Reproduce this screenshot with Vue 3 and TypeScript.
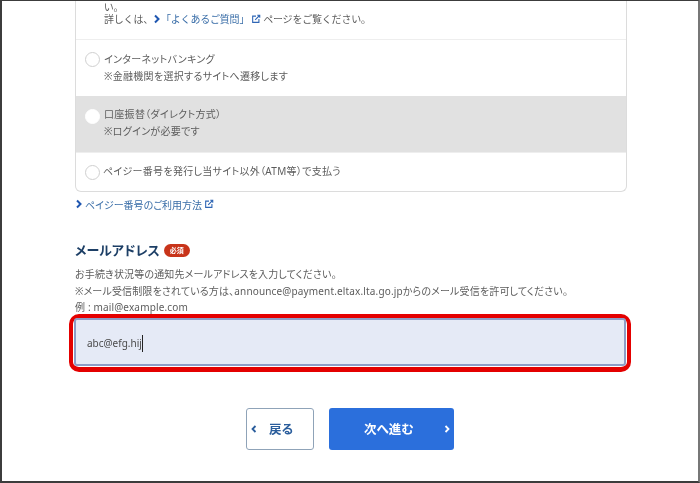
<script setup lang="ts">
interface PayOption { title: string; note?: string; active?: boolean }
const options: PayOption[] = [
  { title: 'インターネットバンキング', note: '※金融機関を選択するサイトへ遷移します' },
  { title: '口座振替（ダイレクト方式）', note: '※ログインが必要です', active: true },
  { title: 'ペイジー番号を発行し当サイト以外（ATM等）で支払う' },
]
</script>

<template>
  <div class="frame">
    <main class="page">
      <section class="card">
        <div class="intro">
          <p class="lead">い。</p>
          <p class="detail">
            <span>詳しくは、</span>
            <svg class="chev" viewBox="0 0 8 10"><path d="M2 1.500l3.500 3.500-3.500 3.500" /></svg>
            <span class="blue">「よくあるご質問」</span>
            <svg class="ext" viewBox="0 0 12 12"><path d="M6 2.500H2v7.500h7.500V6M5 7l5.500-5.500M7.500 1.500h3v3" /></svg>
            <span>ページをご覧ください。</span>
          </p>
        </div>
        <div
          v-for="o in options"
          :key="o.title"
          class="option"
          :class="{ active: o.active, single: !o.note }"
        >
          <span class="radio"></span>
          <div class="option-text">
            <div>{{ o.title }}</div>
            <div v-if="o.note">{{ o.note }}</div>
          </div>
        </div>
      </section>

      <a class="howto">
        <svg class="chev" viewBox="0 0 8 10"><path d="M2 1.500l3.500 3.500-3.500 3.500" /></svg>
        <span>ペイジー番号のご利用方法</span>
        <svg class="ext" viewBox="0 0 12 12"><path d="M6 2.500H2v7.500h7.500V6M5 7l5.500-5.500M7.500 1.500h3v3" /></svg>
      </a>

      <div class="label-row">
        <h2>メールアドレス</h2>
        <span class="badge">必須</span>
      </div>
      <div class="help">
        <p>お手続き状況等の通知先メールアドレスを入力してください。</p>
        <p>※メール受信制限をされている方は、announce@payment.eltax.lta.go.jpからのメール受信を許可してください。</p>
        <p>例 : mail@example.com</p>
      </div>

      <div class="input-wrap">
        <div class="input"><span class="value">abc@efg.hij</span></div>
      </div>

      <div class="actions">
        <button class="btn back" type="button">
          <svg class="arrow" viewBox="0 0 8 10"><path d="M5.500 2l-3 3 3 3" /></svg>
          <span>戻る</span>
        </button>
        <button class="btn next" type="button">
          <span>次へ進む</span>
          <svg class="arrow" viewBox="0 0 8 10"><path d="M2.500 2l3 3-3 3" /></svg>
        </button>
      </div>
    </main>
  </div>
</template>

<style>
html, body { margin: 0; background: #fff; }
</style>

<style scoped>
.frame {
  box-sizing: border-box;
  width: 700px;
  height: 483px;
  border: 2px solid #3c3c3c;
  border-top-width: 1px;
  border-right-color: #777;
  background: #fff;
  overflow: hidden;
  font-family: "Noto Sans", "Noto Sans CJK JP", sans-serif;
  font-feature-settings: "palt";
  font-size: 10px;
  color: #5c5c5c;
}
.page {
  width: 550px;
  margin-left: 72px;
  display: flex;
  flex-direction: column;
  filter: blur(0.3px);
}
p { margin: 0; }
.card {
  box-sizing: border-box;
  width: 552px;
  height: 191px;
  margin-left: 1px;
  border: 1px solid #dcdcdc;
  border-top: 0;
  border-radius: 0 0 6px 6px;
  overflow: hidden;
}
.intro {
  height: 39px;
  padding: 0 0 0 28px;
  box-sizing: border-box;
  border-bottom: 1px solid #eee;
}
.lead { height: 12px; line-height: 12px; }
.detail {
  display: flex;
  align-items: center;
  height: 12px;
  line-height: 12px;
  font-feature-settings: normal;
  letter-spacing: -0.2px;
}
.blue { color: #3a6ea8; }
.chev { width: 8px; height: 10px; flex: none; }
.chev path { fill: none; stroke: #1f56b0; stroke-width: 2; }
.ext { width: 10px; height: 10px; flex: none; margin: 0 2px; }
.ext path { fill: none; stroke: #2f66b5; stroke-width: 1.300; }
.option {
  display: flex;
  align-items: flex-start;
  gap: 4px;
  padding: 11px 0 0 9px;
  height: 56px;
  box-sizing: border-box;
  line-height: 17px;
  letter-spacing: 0.3px;
}
.option.active { background: #e1e1e1; padding-top: 10px; }
.option.single {
  height: 39px;
  align-items: center;
  padding-top: 0;
  gap: 3px;
  border-top: 1px solid #eee;
}
.single .option-text { margin-top: -2px; }
.radio {
  box-sizing: border-box;
  width: 15px;
  height: 15px;
  margin-top: 1px;
  border: 1px solid #cfcfcf;
  border-radius: 50%;
  background: #fff;
  flex: none;
}
.active .radio { border-color: #fff; margin-top: 3px; }
.single .radio { margin-top: 0; }
.howto {
  display: flex;
  align-items: center;
  gap: 2px;
  height: 14px;
  margin: 5px 0 0 1px;
  color: #3a6ea8;
}
.howto .ext { margin-left: 0; }
.label-row {
  display: flex;
  align-items: center;
  gap: 4px;
  height: 20px;
  margin: 28px 0 0 1px;
}
h2 {
  margin: 0;
  font-size: 13px;
  font-weight: 700;
  color: #1d3f66;
}
.badge {
  width: 26px;
  height: 13px;
  margin-top: 2px;
  border-radius: 7px;
  background: #c8341a;
  color: #fff;
  font-size: 7px;
  font-weight: 700;
  line-height: 13px;
  text-align: center;
}
.help {
  margin: 7px 0 0 1px;
  line-height: 16.500px;
  letter-spacing: 0.15px;
}
.input-wrap {
  box-sizing: border-box;
  width: 562px;
  margin: -2px 0 0 -5px;
  padding: 0 1px 1px;
  border: 4px solid #e40000;
  border-bottom-width: 5px;
  border-radius: 10px;
}
.input {
  box-sizing: border-box;
  height: 48px;
  padding: 3px 0 0 11px;
  display: flex;
  align-items: center;
  background: #e5eaf6;
  border: 2px solid #8d9dc6;
  border-radius: 3px;
  color: #4a4a4a;
}
.value {
  border-right: 1px solid #222;
  line-height: 17px;
}
.actions {
  display: flex;
  justify-content: center;
  gap: 15px;
  margin-top: 36px;
  width: 552px;
}
.btn {
  box-sizing: border-box;
  height: 42px;
  border-radius: 3px;
  font-family: inherit;
  font-feature-settings: inherit;
  font-size: 12.500px;
  font-weight: 700;
  display: flex;
  align-items: center;
  padding: 0;
}
.back {
  width: 68px;
  background: #fff;
  border: 1px solid #8fa3b8;
  color: #2a5d9c;
  padding-left: 3px;
  gap: 11px;
}
.next {
  width: 125px;
  background: #2b6fdc;
  border: 0;
  color: #fff;
  padding-left: 35px;
}
.next .arrow { margin-left: 29px; }
.arrow { width: 8px; height: 10px; flex: none; }
.arrow path { fill: none; stroke: currentColor; stroke-width: 1.800; }
</style>
